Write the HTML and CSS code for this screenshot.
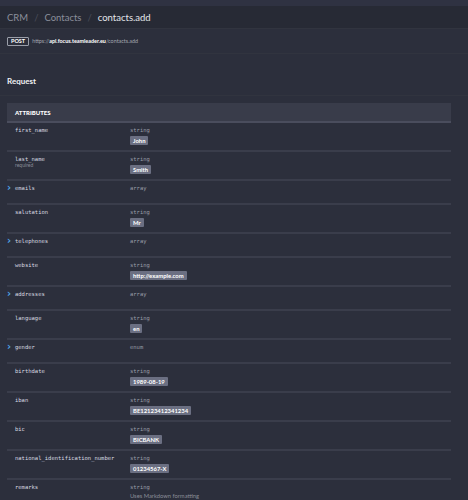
FILE: index.html
```html
<!DOCTYPE html>
<html lang="en">
<head>
    <meta charset="UTF-8">
    <title>contacts.add - API Reference</title>
    <link rel="stylesheet" href="styles.css">
</head>
<body>
    <div class="top-strip"></div>

    <div class="breadcrumb">
        <span class="crumb">CRM</span>
        <span class="sep">/</span>
        <span class="crumb">Contacts</span>
        <span class="sep">/</span>
        <span class="crumb current">contacts.add</span>
    </div>

    <div class="endpoint">
        <span class="method">POST</span>
        <span class="url">https://<b>api.focus.teamleader.eu</b>/contacts.add</span>
    </div>

    <div class="section-title">
        <h2>Request</h2>
    </div>

    <div class="attributes">
        <div class="attributes-header">ATTRIBUTES</div>

        <div class="attr">
            <div class="attr-name">first_name</div>
            <div class="attr-type">string<span class="example">John</span></div>
        </div>
        <div class="attr">
            <div class="attr-name">last_name<span class="required">required</span></div>
            <div class="attr-type">string<span class="example">Smith</span></div>
        </div>
        <div class="attr">
            <div class="attr-name"><span class="chevron">&#x203A;</span>emails</div>
            <div class="attr-type">array</div>
        </div>
        <div class="attr">
            <div class="attr-name">salutation</div>
            <div class="attr-type">string<span class="example">Mr</span></div>
        </div>
        <div class="attr">
            <div class="attr-name"><span class="chevron">&#x203A;</span>telephones</div>
            <div class="attr-type">array</div>
        </div>
        <div class="attr">
            <div class="attr-name">website</div>
            <div class="attr-type">string<span class="example">http://example.com</span></div>
        </div>
        <div class="attr">
            <div class="attr-name"><span class="chevron">&#x203A;</span>addresses</div>
            <div class="attr-type">array</div>
        </div>
        <div class="attr">
            <div class="attr-name">language</div>
            <div class="attr-type">string<span class="example">en</span></div>
        </div>
        <div class="attr">
            <div class="attr-name"><span class="chevron">&#x203A;</span>gender</div>
            <div class="attr-type">enum</div>
        </div>
        <div class="attr">
            <div class="attr-name">birthdate</div>
            <div class="attr-type">string<span class="example">1989-08-19</span></div>
        </div>
        <div class="attr">
            <div class="attr-name">iban</div>
            <div class="attr-type">string<span class="example">BE12123412341234</span></div>
        </div>
        <div class="attr">
            <div class="attr-name">bic</div>
            <div class="attr-type">string<span class="example">BICBANK</span></div>
        </div>
        <div class="attr">
            <div class="attr-name">national_identification_number</div>
            <div class="attr-type">string<span class="example">01234567-X</span></div>
        </div>
        <div class="attr">
            <div class="attr-name">remarks</div>
            <div class="attr-type">string<span class="note">Uses Markdown formatting</span></div>
        </div>
    </div>
</body>
</html>
```

FILE: styles.css
```css
* {
    margin: 0;
    padding: 0;
    box-sizing: border-box;
}

body {
    font-family: Lato, "Liberation Sans", sans-serif;
    background: #2c2f3c;
    color: #e2e4e9;
}

.top-strip {
    height: 6px;
    background: #2f3242;
}

.breadcrumb {
    height: 23px;
    background: #272a35;
    border-bottom: 1px solid #31343f;
    padding: 0 7px;
    display: flex;
    align-items: center;
    gap: 6px;
    font-size: 9.5px;
}

.crumb {
    color: #8b8f9b;
}

.crumb.current {
    color: #e4e6ea;
}

.sep {
    color: #4b4f5b;
}

.endpoint {
    height: 25px;
    border-bottom: 1px solid #31343f;
    padding: 0 7px;
    display: flex;
    align-items: center;
    gap: 3px;
}

.method {
    border: 1px solid #9a9ea9;
    border-radius: 1px;
    padding: 0 3px;
    height: 9px;
    line-height: 7px;
    font-size: 5.5px;
    font-weight: bold;
    color: #fff;
}

.url {
    font-size: 5.4px;
    color: #a4a7b1;
}

.url b {
    color: #fff;
}

.section-title {
    height: 42px;
    border-bottom: 1px solid #31343f;
    padding: 0 7px 9px;
    display: flex;
    align-items: flex-end;
}

.section-title h2 {
    font-size: 8px;
    font-weight: bold;
    color: #f0f1f4;
}

.attributes {
    margin: 7px 17px 0 7px;
}

.attributes-header {
    height: 20px;
    background: #393c4a;
    border-bottom: 2px solid #4a4d5d;
    padding: 0 8px;
    display: flex;
    align-items: center;
    font-size: 6px;
    font-weight: 900;
    color: #fff;
}

.attr {
    display: grid;
    grid-template-columns: 123px 1fr;
    min-height: 24px;
    padding: 4px 0 5px;
    border-top: 2px solid #3a3d4b;
}

.attr:nth-child(2) {
    border-top: 0;
}

.attr-name,
.attr-type {
    display: flex;
    flex-direction: column;
    align-items: flex-start;
    font-family: "DejaVu Sans Mono", monospace;
    font-size: 5.5px;
    line-height: 7px;
}

.attr-name {
    position: relative;
    padding-left: 8px;
    color: #d8dae0;
}

.attr-type {
    color: #9a9da8;
}

.chevron {
    position: absolute;
    left: 0;
    top: -1px;
    font-family: "DejaVu Sans", sans-serif;
    font-size: 10px;
    font-weight: bold;
    line-height: 8px;
    color: #4fa3e8;
}

.required {
    font-family: Lato, "Liberation Sans", sans-serif;
    font-size: 5px;
    line-height: 5px;
    color: #8a8d98;
}

.example {
    margin-top: 2px;
    height: 9px;
    padding: 0 3px;
    border-radius: 1px;
    background: #6b6f82;
    font-family: Lato, "Liberation Sans", sans-serif;
    font-size: 5.9px;
    font-weight: bold;
    line-height: 9px;
    color: #fff;
}

.note {
    margin-top: 1px;
    font-family: Lato, "Liberation Sans", sans-serif;
    font-size: 5.8px;
    line-height: 7px;
    color: #8a8d98;
}
```
